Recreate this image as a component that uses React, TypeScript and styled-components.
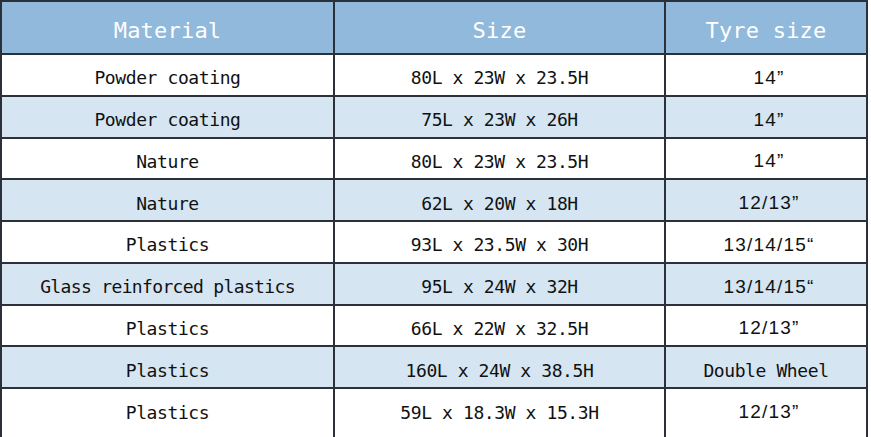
import { createGlobalStyle, styled } from "styled-components";

type Row = {
    material: string;
    size: string;
    tyre: string;
};

const rows: Row[] = [
    { material: "Powder coating", size: "80L x 23W x 23.5H", tyre: "14”" },
    { material: "Powder coating", size: "75L x 23W x 26H", tyre: "14”" },
    { material: "Nature", size: "80L x 23W x 23.5H", tyre: "14”" },
    { material: "Nature", size: "62L x 20W x 18H", tyre: "12/13”" },
    { material: "Plastics", size: "93L x 23.5W x 30H", tyre: "13/14/15“" },
    { material: "Glass reinforced plastics", size: "95L x 24W x 32H", tyre: "13/14/15“" },
    { material: "Plastics", size: "66L x 22W x 32.5H", tyre: "12/13”" },
    { material: "Plastics", size: "160L x 24W x 38.5H", tyre: "Double Wheel" },
    { material: "Plastics", size: "59L x 18.3W x 15.3H", tyre: "12/13”" },
];

const App = () => {
    return (
        <>
            <GlobalStyle />
            <SpecTable>
                <colgroup>
                    <col style={{ width: 333 }} />
                    <col style={{ width: 331 }} />
                    <col />
                </colgroup>
                <thead>
                    <tr>
                        <HeadCell>Material</HeadCell>
                        <HeadCell>Size</HeadCell>
                        <HeadCell>Tyre size</HeadCell>
                    </tr>
                </thead>
                <tbody>
                    {rows.map((row, i) => (
                        <BodyRow key={i} $shaded={i % 2 === 1}>
                            <Cell $tight={row.material.length > 20}>{row.material}</Cell>
                            <Cell>{row.size}</Cell>
                            {row.tyre === "Double Wheel" ? (
                                <Cell>{row.tyre}</Cell>
                            ) : (
                                <TyreCell>{row.tyre}</TyreCell>
                            )}
                        </BodyRow>
                    ))}
                </tbody>
            </SpecTable>
        </>
    );
};

const GlobalStyle = createGlobalStyle`
    html, body {
        margin: 0;
        padding: 0;
        background: #ffffff;
        overflow: hidden;
    }
`;

const SpecTable = styled.table`
    width: 868px;
    border-collapse: collapse;
    table-layout: fixed;
    border: 2px solid #2c3038;
    border-bottom: none;
    font-family: "DejaVu Sans Mono", "Liberation Mono", monospace;
    color: #111111;

    & td, & th {
        border: 2px solid #2c3038;
        padding: 0;
        text-align: center;
        vertical-align: middle;
    }

    & tbody tr:last-child {
        height: 52px;
    }

    & tbody tr:last-child td {
        border-bottom: none;
        padding-bottom: 11px;
    }
`;

const HeadCell = styled.th`
    height: 46px;
    background-color: #90b9dc;
    color: #ffffff;
    font-size: 22px;
    font-weight: normal;
    letter-spacing: 0.2px;
    padding-top: 5px !important;
`;

const BodyRow = styled.tr<{ $shaded: boolean }>`
    height: 41.75px;
    background-color: ${(p) => (p.$shaded ? "#d5e5f2" : "#ffffff")};
`;

const Cell = styled.td<{ $tight?: boolean }>`
    font-size: 18px;
    letter-spacing: ${(p) => (p.$tight ? "-0.65px" : "-0.4px")};
    padding-top: 6px !important;
`;

const TyreCell = styled.td`
    font-family: "Liberation Sans", Arial, sans-serif;
    font-size: 19px;
    letter-spacing: 1.2px;
    padding-top: 6px !important;
    padding-left: 6px !important;
`;

export default App;
